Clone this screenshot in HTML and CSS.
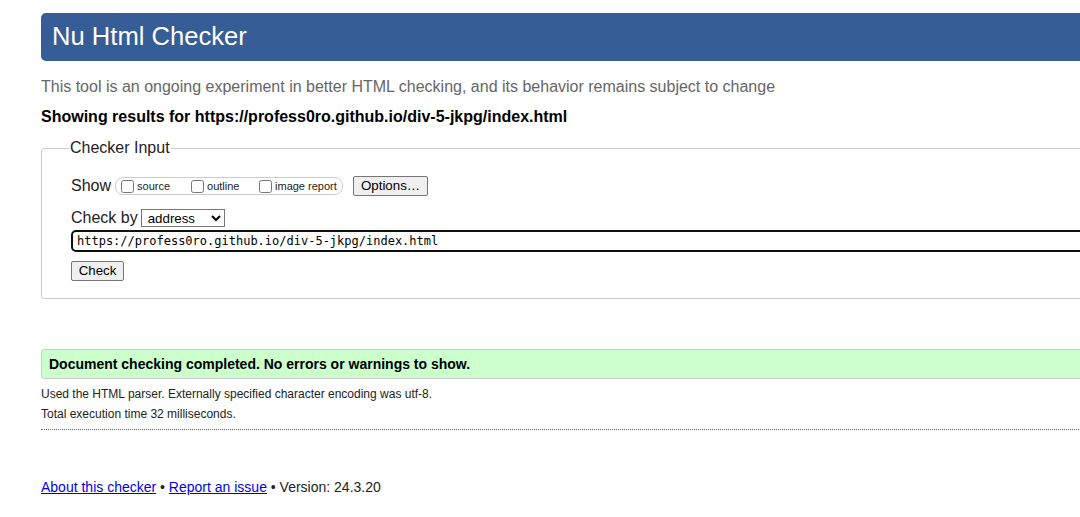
FILE: index.html
```html
<!DOCTYPE html>
<html lang="en">
<head>
<meta charset="utf-8">
<title>Nu Html Checker</title>
<link rel="stylesheet" href="styles.css">
</head>
<body>
<div class="page">
  <h1 class="title">Nu Html Checker</h1>
  <p class="lede">This tool is an ongoing experiment in better HTML checking, and its behavior remains subject to change</p>
  <p class="results-for">Showing results for https://profess0ro.github.io/div-5-jkpg/index.html</p>
  <form class="checker-form">
    <fieldset class="checker-input">
      <legend class="legend">Checker Input</legend>
      <div class="row show-row">
        <span class="row-label">Show</span>
        <span class="opts-group">
          <label class="opt opt-source"><input type="checkbox" class="cb">source</label>
          <label class="opt opt-outline"><input type="checkbox" class="cb">outline</label>
          <label class="opt opt-image"><input type="checkbox" class="cb">image report</label>
        </span>
        <button type="button" class="btn options-btn">Options…</button>
      </div>
      <div class="row checkby-row">
        <span class="row-label">Check by</span>
        <select class="select"><option>address</option></select>
      </div>
      <div class="url-wrap">
        <input type="text" class="url" value="https://profess0ro.github.io/div-5-jkpg/index.html">
      </div>
      <div class="check-wrap">
        <button type="button" class="btn check-btn">Check</button>
      </div>
    </fieldset>
  </form>
  <div class="success">Document checking completed. No errors or warnings to show.</div>
  <p class="details">Used the HTML parser. Externally specified character encoding was utf-8.</p>
  <p class="details">Total execution time 32 milliseconds.</p>
  <hr class="sep">
  <p class="footer"><a href="#" class="link">About this checker</a> • <a href="#" class="link">Report an issue</a> • Version: 24.3.20</p>
</div>
</body>
</html>
```
FILE: styles.css
```css
html, body {
  margin: 0;
  padding: 0;
  overflow: hidden;
  background: #fff;
}
body {
  font-family: "Liberation Sans", Arial, sans-serif;
  color: #000;
}
.page {
  margin-left: 41px;
  width: 1100px;
  padding-top: 13px;
}
.title {
  margin: 0;
  background: #365d95;
  color: #fff;
  font-weight: normal;
  font-size: 25.6px;
  line-height: 30px;
  padding: 8px 11px 10px;
  border-radius: 5px;
}
.lede {
  margin: 17px 0 0;
  font-size: 16px;
  line-height: 18px;
  color: #666;
}
.results-for {
  margin: 12px 0 0;
  font-size: 16px;
  line-height: 18px;
  font-weight: bold;
}
.checker-form {
  margin-top: 13px;
}
.checker-input {
  margin: 0;
  border: 1px solid #ccc;
  border-radius: 3px;
  padding: 0 0 17px 29px;
}
.legend {
  font-size: 16px;
  padding: 0 1px;
  margin-left: -2px;
  color: #222;
}
.row {
  display: flex;
  align-items: center;
}
.show-row {
  margin-top: 18px;
  height: 22px;
}
.row-label {
  font-size: 16px;
  color: #222;
}
.opts-group {
  display: flex;
  align-items: center;
  margin-left: 4px;
  height: 16px;
  width: 226px;
  border: 1px solid #ccc;
  border-radius: 8px;
  font-size: 11px;
  color: #222;
}
.opt {
  display: flex;
  align-items: center;
}
.cb {
  margin: 0 3px 0 0;
  width: 13px;
  height: 13px;
}
.opt-source { margin-left: 5px; width: 70px; }
.opt-outline { width: 68px; }
.btn {
  font-family: "Liberation Sans", Arial, sans-serif;
  font-size: 13.3px;
  color: #000;
  background: #efefef;
  border: 1px solid #767676;
  border-radius: 2px;
  padding: 1px 6px;
  height: 20px;
  line-height: 16px;
}
.options-btn {
  margin-left: 10px;
  width: 75px;
}
.checkby-row {
  margin-top: 11px;
  height: 20px;
}
.select {
  margin-left: 3px;
  width: 84px;
  height: 18px;
  font-family: "Liberation Sans", Arial, sans-serif;
  font-size: 13.3px;
  border: 1px solid #767676;
  border-radius: 0;
  padding: 0 2px;
  background: #fff;
  color: #000;
}
.url-wrap {
  margin-top: 2px;
}
.url {
  box-sizing: border-box;
  width: 1100px;
  height: 22px;
  border: 2px solid #101010;
  border-radius: 5px;
  padding: 0 4px;
  font-family: "DejaVu Sans Mono", "Liberation Mono", monospace;
  font-size: 12px;
  color: #000;
  outline: none;
}
.check-wrap {
  margin-top: 9px;
}
.check-btn {
  width: 53px;
  padding: 1px 4px;
}
.success {
  margin-top: 50px;
  background: #ccffcc;
  border: 1px solid #ccc;
  border-radius: 3px;
  font-weight: bold;
  font-size: 14px;
  line-height: 16px;
  padding: 6px 7px;
}
.details {
  margin: 8px 0 0;
  font-size: 12px;
  line-height: 14px;
  color: #222;
}
.details + .details {
  margin-top: 6px;
}
.sep {
  margin: 8px 0 0;
  border: 0;
  border-top: 1px dotted #666;
  height: 0;
}
.footer {
  margin: 49px 0 0;
  font-size: 14px;
  line-height: 16px;
  color: #222;
}
.link {
  color: #00e;
  text-decoration: underline;
}
```
